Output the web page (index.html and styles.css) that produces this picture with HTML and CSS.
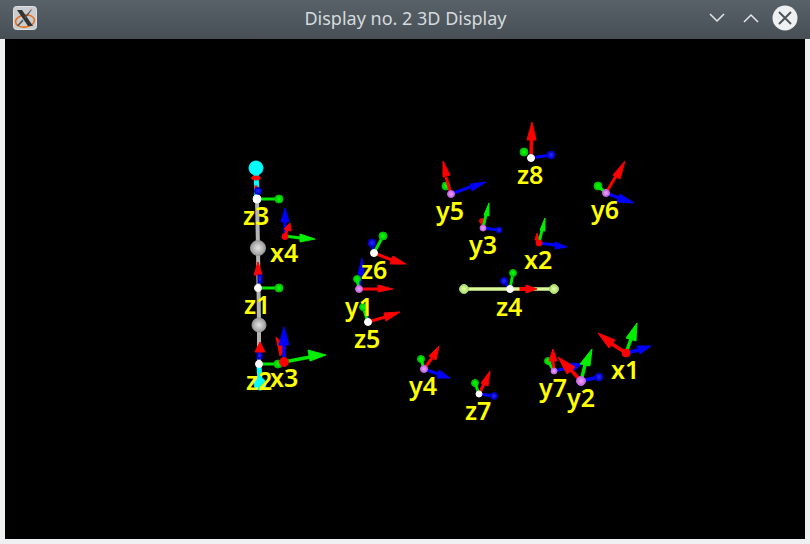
FILE: index.html
```html
<!DOCTYPE html>
<html>

<head>
  <meta charset="utf-8">
  <title>Display no. 2 3D Display</title>
  <link rel="stylesheet" href="styles.css">
</head>

<body>

  <div class="titlebar">
    <svg class="app-icon" width="24" height="24" viewBox="0 0 24 24">
      <rect x="0.5" y="0.5" width="23" height="23" rx="3" fill="#c9cdd0" stroke="#dfe1e3" />
      <ellipse cx="12" cy="15" rx="9.5" ry="6" fill="none" stroke="#e8701c" stroke-width="1.6" transform="rotate(-8 12 15)" />
      <path d="M4 4h5l11 16h-5z" fill="#333333" />
      <path d="M19 3.500l-6.500 9-1-1.500 6.500-7.500zM9.500 13.500l1 1.500-5 5h-2z" fill="#555555" />
    </svg>
    <div class="title">Display no. 2 3D Display</div>
    <div class="buttons">
      <svg width="16" height="10" viewBox="0 0 16 10">
        <path d="M1 1l7 7 7-7" class="chevron" />
      </svg>
      <svg width="16" height="10" viewBox="0 0 16 10">
        <path d="M1 9l7-7 7 7" class="chevron" />
      </svg>
      <svg width="26" height="26" viewBox="0 0 26 26">
        <circle cx="13" cy="13" r="12.5" fill="#eff0f1" />
        <path d="M7 7l12 12M19 7l-12 12" class="cross" />
      </svg>
    </div>
  </div>

  <div class="viewport">
    <!-- coordinates are the same as on the full screenshot -->
    <svg class="scene" width="800" height="500" viewBox="5 39 800 500">
      <defs>
        <radialGradient id="ball-gray"><stop offset="0" stop-color="#e4e4e4" /><stop offset="1" stop-color="#9a9a9a" /></radialGradient>
        <radialGradient id="ball-violet"><stop offset="0" stop-color="#f0a0ff" /><stop offset="1" stop-color="#c468e0" /></radialGradient>
        <radialGradient id="ball-green"><stop offset="0" stop-color="#10ff10" /><stop offset="1" stop-color="#00c400" /></radialGradient>
        <radialGradient id="ball-blue"><stop offset="0" stop-color="#2828ff" /><stop offset="1" stop-color="#0000c4" /></radialGradient>
        <radialGradient id="ball-lime"><stop offset="0" stop-color="#e8ffb0" /><stop offset="1" stop-color="#a8dc68" /></radialGradient>
      </defs>

      <!-- skeleton -->
      <line class="bone" x1="257" y1="199" x2="258" y2="248" />
      <line class="bone" x1="258" y1="248" x2="259" y2="325" />
      <line class="bone" x1="259" y1="325" x2="259" y2="364" />
      <line class="cyan" x1="256" y1="168" x2="257" y2="199" />
      <line class="cyan" x1="259" y1="364" x2="260" y2="384" />
      <circle class="c-cyan" cx="256" cy="168" r="7" />
      <circle class="c-cyan" cx="260" cy="384" r="6" />
      <circle class="c-gray" cx="258" cy="248" r="7.500" />
      <circle class="c-gray" cx="259" cy="325" r="7" />
      <line class="lime" x1="464" y1="289" x2="554" y2="289" />
      <circle class="c-lime" cx="464" cy="289" r="4.500" />
      <circle class="c-lime" cx="554" cy="289" r="4.500" />

      <!-- z3 -->
      <ellipse class="c-red" cx="256" cy="178" rx="4.500" ry="2" />
      <rect class="c-red" x="255" y="186" width="2" height="3" />
      <circle class="c-blue" cx="258" cy="191" r="3.500" />
      <line class="g" x1="257" y1="199" x2="279" y2="199" />
      <circle class="c-green" cx="279" cy="199" r="4" />
      <circle class="c-white" cx="257" cy="199" r="4" />

      <!-- x4 -->
      <line class="b" x1="285" y1="236" x2="285" y2="222" />
      <polygon class="f-b" points="285,208 289,222 281,222" />
      <line class="r" x1="285" y1="236" x2="288" y2="228" />
      <polygon class="f-r" points="290,223 291,231 284,229" />
      <line class="g" x1="285" y1="236" x2="300" y2="238" />
      <polygon class="f-g" points="315,239 300,242 300,234" />
      <circle class="c-red" cx="285" cy="236.500" r="3" />

      <!-- z1 -->
      <polygon class="f-r" points="258,262 262,275 254,275" />
      <rect class="c-blue" x="258" y="275" width="4" height="8" />
      <line class="g" x1="258" y1="288" x2="279" y2="288" />
      <circle class="c-green" cx="279" cy="288" r="4" />
      <circle class="c-white" cx="258" cy="288" r="3.500" />

      <!-- z2 -->
      <rect class="c-blue" x="257" y="352" width="5" height="7" />
      <polygon class="f-r" points="260,342 265,352 255,352" />
      <line class="g" x1="259" y1="364" x2="279" y2="364" />
      <circle class="c-green" cx="278" cy="364" r="4" />
      <circle class="c-white" cx="259" cy="364" r="3.500" />

      <!-- x3 -->
      <polygon class="f-r" points="276,337 286,348 280,356" />
      <line class="b big" x1="284" y1="362" x2="284" y2="345" />
      <polygon class="f-b" points="284,327 289,345 279,345" />
      <line class="g big" x1="284" y1="362" x2="310" y2="357" />
      <polygon class="f-g" points="326,355 308,350 310,361" />
      <circle class="c-red" cx="284" cy="362" r="4.500" />

      <!-- z6 -->
      <line class="b" x1="374" y1="253" x2="372" y2="243" />
      <circle class="c-blue" cx="372" cy="243" r="4" />
      <line class="g" x1="374" y1="253" x2="383" y2="236" />
      <circle class="c-green" cx="383" cy="236" r="4" />
      <line class="r" x1="374" y1="253" x2="392" y2="260" />
      <polygon class="f-r" points="406,264 390,264 393,256" />
      <circle class="c-white" cx="374" cy="253" r="3.500" />

      <!-- y1 -->
      <line class="b" x1="359" y1="289" x2="361" y2="274" />
      <polygon class="f-b" points="362,258 364,275 358,274" />
      <circle class="c-green" cx="357" cy="279" r="3.500" />
      <line class="g" x1="359" y1="289" x2="357" y2="279" />
      <line class="r" x1="359" y1="289" x2="378" y2="289" />
      <polygon class="f-r" points="393,289 378,292 378,285" />
      <circle class="c-violet" cx="359" cy="289" r="3.500" />

      <!-- z5 -->
      <line class="b" x1="368" y1="322" x2="366" y2="308" />
      <line class="g" x1="368" y1="322" x2="363" y2="307" />
      <circle class="c-green" cx="363" cy="307" r="3.500" />
      <line class="r" x1="368" y1="322" x2="385" y2="317" />
      <polygon class="f-r" points="400,312 386,321 384,313" />
      <circle class="c-white" cx="368" cy="322" r="3.500" />

      <!-- y5 -->
      <circle class="c-green" cx="446" cy="186" r="4" />
      <line class="r" x1="451" y1="194" x2="446" y2="177" />
      <polygon class="f-r" points="443,161 450,175 443,177" />
      <line class="b" x1="451" y1="194" x2="470" y2="187" />
      <polygon class="f-b" points="486,182 472,191 470,184" />
      <circle class="c-violet" cx="451" cy="194" r="3.500" />

      <!-- y3 -->
      <line class="r" x1="483" y1="228" x2="482" y2="221" />
      <circle class="c-red" cx="482" cy="221" r="2.500" />
      <line class="g" x1="483" y1="228" x2="486" y2="215" />
      <polygon class="f-g" points="489,203 489,216 484,215" />
      <line class="b" x1="483" y1="228" x2="499" y2="230" />
      <circle class="c-blue" cx="499" cy="230" r="3" />
      <circle class="c-violet" cx="483" cy="228" r="3" />

      <!-- x2 -->
      <polygon class="f-r" points="537,233 540,241 535,240" />
      <line class="g" x1="539" y1="243" x2="542" y2="230" />
      <polygon class="f-g" points="545,218 545,231 540,230" />
      <line class="b" x1="539" y1="243" x2="555" y2="245" />
      <polygon class="f-b" points="567,247 555,249 555,242" />
      <circle class="c-red" cx="539" cy="243" r="3" />

      <!-- z8 -->
      <circle class="c-green" cx="524" cy="152" r="4" />
      <line class="r big" x1="531" y1="158" x2="531.500" y2="140" />
      <polygon class="f-r" points="532,122 536,140 527,140" />
      <line class="b" x1="531" y1="158" x2="551" y2="155" />
      <circle class="c-blue" cx="551" cy="155" r="4" />
      <circle class="c-white" cx="531" cy="158" r="3.500" />

      <!-- y6 -->
      <circle class="c-green" cx="598" cy="186" r="4" />
      <line class="g" x1="606" y1="193" x2="598" y2="186" />
      <line class="r" x1="606" y1="193" x2="616" y2="176" />
      <polygon class="f-r" points="625,161 620,179 613,175" />
      <line class="b" x1="606" y1="193" x2="619" y2="198" />
      <polygon class="f-b" points="634,203 617,202 620,194" />
      <circle class="c-violet" cx="606" cy="193" r="3.500" />

      <!-- z4 -->
      <line class="b" x1="510" y1="289" x2="504" y2="281" />
      <circle class="c-blue" cx="504" cy="281" r="3.500" />
      <line class="g" x1="510" y1="289" x2="513" y2="273" />
      <circle class="c-green" cx="513" cy="273" r="3.500" />
      <polygon class="f-r" points="537,289 526,285 526,293" />
      <rect class="c-red" x="520" y="287.500" width="7" height="3" />
      <circle class="c-white" cx="510" cy="289" r="3.500" />

      <!-- x1 -->
      <line class="r big" x1="626" y1="353" x2="612" y2="344" />
      <polygon class="f-r" points="598,333 615,340 609,348" />
      <line class="g big" x1="626" y1="353" x2="631" y2="339" />
      <polygon class="f-g" points="637,323 636,341 626,338" />
      <line class="b big" x1="626" y1="353" x2="639" y2="350" />
      <polygon class="f-b" points="651,346 640,354 637,346" />
      <circle class="c-red" cx="626" cy="353" r="4" />

      <!-- y7 -->
      <circle class="c-green" cx="548" cy="361" r="3.500" />
      <line class="g" x1="554" y1="371" x2="548" y2="361" />
      <line class="b" x1="554" y1="371" x2="572" y2="367" />
      <polygon class="f-b" points="582,364 573,371 571,363" />
      <line class="r" x1="554" y1="371" x2="553" y2="361" />
      <polygon class="f-r" points="553,349 557,361 549,361" />
      <circle class="c-violet" cx="554" cy="371" r="3" />

      <!-- y2 -->
      <line class="r big" x1="581" y1="381" x2="571" y2="370" />
      <polygon class="f-r" points="558,357 575,367 567,374" />
      <line class="g big" x1="581" y1="381" x2="585" y2="365" />
      <polygon class="f-g" points="592,349 590,366 580,364" />
      <line class="b big" x1="581" y1="381" x2="599" y2="377" />
      <circle class="c-blue" cx="599" cy="377" r="4" />
      <circle class="c-violet" cx="581" cy="381" r="4.500" />

      <!-- y4 -->
      <circle class="c-green" cx="421" cy="359" r="3.500" />
      <line class="g" x1="424" y1="369" x2="421" y2="359" />
      <line class="r" x1="424" y1="369" x2="432" y2="358" />
      <polygon class="f-r" points="439,346 436,360 429,356" />
      <line class="b" x1="424" y1="369" x2="438" y2="374" />
      <polygon class="f-b" points="450,378 437,378 439,370" />
      <circle class="c-violet" cx="424" cy="369" r="3.500" />

      <!-- z7 -->
      <circle class="c-green" cx="475" cy="383" r="3.500" />
      <line class="g" x1="479" y1="394" x2="475" y2="383" />
      <line class="r" x1="479" y1="394" x2="484" y2="384" />
      <polygon class="f-r" points="490,371 488,386 481,383" />
      <line class="b" x1="479" y1="394" x2="494" y2="396" />
      <circle class="c-blue" cx="494" cy="396" r="3.500" />
      <circle class="c-white" cx="479" cy="394" r="3" />

      <!-- labels -->
      <text class="label" x="243" y="225">z3</text>
      <text class="label" x="270" y="262">x4</text>
      <text class="label" x="244" y="314">z1</text>
      <text class="label" x="246" y="390">z2</text>
      <text class="label" x="270" y="387">x3</text>
      <text class="label" x="361" y="279">z6</text>
      <text class="label" x="345" y="316">y1</text>
      <text class="label" x="354" y="348">z5</text>
      <text class="label" x="436" y="220">y5</text>
      <text class="label" x="469" y="254">y3</text>
      <text class="label" x="524" y="269">x2</text>
      <text class="label" x="517" y="184">z8</text>
      <text class="label" x="591" y="219">y6</text>
      <text class="label" x="496" y="316">z4</text>
      <text class="label" x="611" y="379">x1</text>
      <text class="label" x="539" y="397">y7</text>
      <text class="label" x="567" y="407">y2</text>
      <text class="label" x="409" y="395">y4</text>
      <text class="label" x="465" y="420">z7</text>
    </svg>
  </div>

</body>

</html>
```

FILE: styles.css
```css
body {
  margin: 0;
  background-color: #eff0f1;
  font-family: "Noto Sans", sans-serif;
}

/* window decoration */
.titlebar {
  display: grid;
  grid-template-columns: 1fr auto 1fr;
  align-items: center;
  height: 39px;
  padding: 0 12px 3px 13px;
  box-sizing: border-box;
  background: linear-gradient(#586269, #474f55);
}

.app-icon {
  display: block;
}

.title {
  font-size: 18px;
  line-height: 24px;
  color: #d6dadd;
}

.buttons {
  display: flex;
  align-items: center;
  justify-content: flex-end;
  gap: 18px;
}

.buttons svg {
  display: block;
}

.buttons svg:last-child {
  margin-left: -5px;
}

.chevron {
  fill: none;
  stroke: #e4e6e8;
  stroke-width: 1.5;
}

.cross {
  fill: none;
  stroke: #4d565d;
  stroke-width: 2;
}

/* 3d view */
.viewport {
  margin: 0 5px;
  background-color: #000;
}

.scene {
  display: block;
}

.scene line {
  stroke-width: 3;
}

.scene .big {
  stroke-width: 3.5;
}

.scene .bone {
  stroke: #b4b4b4;
  stroke-width: 4;
}

.scene .cyan {
  stroke: #00ffff;
  stroke-width: 5;
}

.scene .lime {
  stroke: #d8fa98;
  stroke-width: 3.5;
}

.scene polygon,
.scene circle {
  stroke-width: 1;
}

.r {
  stroke: #ff0000;
}

.g {
  stroke: #00e800;
}

.b {
  stroke: #0000ff;
}

.f-r,
.c-red {
  fill: #ff0000;
  stroke: #ff0000;
}

.f-g {
  fill: #00f000;
  stroke: #00f000;
}

.f-b {
  fill: #0000ff;
  stroke: #0000ff;
}

.c-cyan {
  fill: #00ffff;
  stroke: #00ffff;
}

.c-white {
  fill: #ffffff;
  stroke: #ffffff;
}

.c-gray {
  fill: url(#ball-gray);
  stroke: #9a9a9a;
}

.c-violet {
  fill: url(#ball-violet);
  stroke: #c468e0;
}

.c-green {
  fill: url(#ball-green);
  stroke: #00c400;
}

.c-blue {
  fill: url(#ball-blue);
  stroke: #0000c4;
}

.c-lime {
  fill: url(#ball-lime);
  stroke: #a8dc68;
}

.label {
  font-family: "Noto Sans", sans-serif;
  font-size: 25px;
  font-weight: 600;
  fill: #ffff00;
}
```
